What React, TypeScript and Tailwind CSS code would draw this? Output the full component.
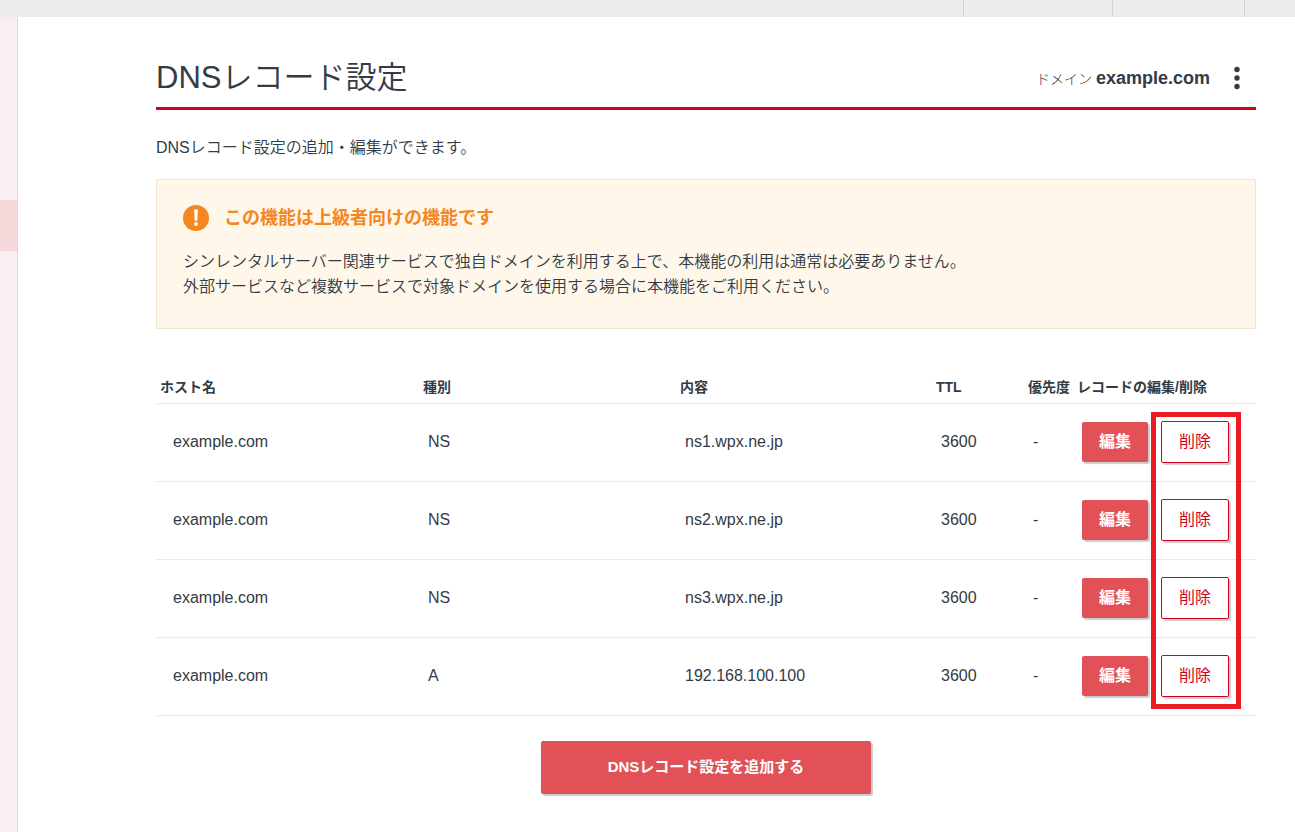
import { clsx } from 'clsx'

const records = [
  { host: 'example.com', type: 'NS', content: 'ns1.wpx.ne.jp', ttl: 3600, priority: '-' },
  { host: 'example.com', type: 'NS', content: 'ns2.wpx.ne.jp', ttl: 3600, priority: '-' },
  { host: 'example.com', type: 'NS', content: 'ns3.wpx.ne.jp', ttl: 3600, priority: '-' },
  { host: 'example.com', type: 'A', content: '192.168.100.100', ttl: 3600, priority: '-' },
]

const columns = [
  { label: 'ホスト名', width: 'w-auto' },
  { label: '種別', width: 'w-[257px]' },
  { label: '内容', width: 'w-[256px]' },
  { label: 'TTL', width: 'w-[92px]' },
  { label: '優先度', width: 'w-[49px]' },
  { label: 'レコードの編集/削除', width: 'w-[183px]' },
]

const cell = 'border-b border-[#ebebeb] p-0 pb-0.5 pl-[9px]'

function TopBar() {
  return (
    <header className="flex h-[17px] justify-end bg-[#ececec]">
      <div className="w-[149px] border-l border-[#d3d3d3]" />
      <div className="w-[132px] border-l border-[#d3d3d3]" />
      <div className="w-[51px] border-l border-[#d3d3d3]" />
    </header>
  )
}

function Sidebar() {
  return (
    <aside className="w-[18px] shrink-0 border-r border-[#dfd8d9] bg-[#faeff0] pt-[183px]">
      <div className="h-[51px] bg-[#f5d8da]" />
    </aside>
  )
}

function PageHeader() {
  return (
    <div className="flex items-center justify-between border-b-[3px] border-[#d0021b] pb-1.5">
      <h1 className="text-[31px] leading-[46px] font-[350]">DNSレコード設定</h1>
      <div className="flex items-center pr-4">
        <p className="text-sm font-light">
          ドメイン <strong className="text-lg font-bold">example.com</strong>
        </p>
        <button type="button" aria-label="メニュー" className="ml-6">
          <svg width="6" height="24" viewBox="0 0 6 24" fill="currentColor" aria-hidden="true">
            <circle cx="3" cy="3.5" r="2.7" />
            <circle cx="3" cy="12" r="2.7" />
            <circle cx="3" cy="20.5" r="2.7" />
          </svg>
        </button>
      </div>
    </div>
  )
}

function Notice() {
  return (
    <section className="mt-[19px] rounded-xs border border-[#efe5cc] bg-[#fff8ea] px-[26px] pt-[25px] pb-[29px]">
      <h2 className="flex items-center gap-[15px] text-lg leading-[26px] font-bold text-[#f6861f]">
        <svg width="26" height="26" viewBox="0 0 26 26" aria-hidden="true">
          <circle cx="13" cy="13" r="13" fill="#f6861f" />
          <path d="M11.1 4.5h3.8l-.6 11.2h-2.6z" fill="#fff" />
          <circle cx="13" cy="19" r="1.9" fill="#fff" />
        </svg>
        この機能は上級者向けの機能です
      </h2>
      <p className="mt-[18px] text-base leading-[25px] font-[350]">
        シンレンタルサーバー関連サービスで独自ドメインを利用する上で、本機能の利用は通常は必要ありません。
        <br />
        外部サービスなど複数サービスで対象ドメインを使用する場合に本機能をご利用ください。
      </p>
    </section>
  )
}

function RecordTable() {
  return (
    <div className="relative mt-[42px]">
      <table className="w-full table-fixed border-separate border-spacing-0 text-left">
        <thead>
          <tr className="h-[33px] text-sm">
            {columns.map((column) => (
              <th
                key={column.label}
                scope="col"
                className={clsx('border-b border-[#ebebeb] p-0 pl-1 font-bold whitespace-nowrap', column.width)}
              >
                {column.label}
              </th>
            ))}
          </tr>
        </thead>
        <tbody>
          {records.map((record) => (
            <tr key={record.content} className="h-[78px] text-base">
              <td className="border-b border-[#ebebeb] p-0 pb-0.5 pl-[17px]">{record.host}</td>
              <td className={cell}>{record.type}</td>
              <td className={cell}>{record.content}</td>
              <td className={cell}>{record.ttl}</td>
              <td className={cell}>{record.priority}</td>
              <td className={cell}>
                <div className="flex items-center gap-[13px]">
                  <button
                    type="button"
                    className="h-10 w-[66px] rounded-xs bg-[#e25157] font-bold text-white shadow-[2px_2px_1px_rgba(0,0,0,0.2)]"
                  >
                    編集
                  </button>
                  <button
                    type="button"
                    className="h-[42px] w-[68px] rounded-xs border border-[#d0021b] bg-white text-[#d0021b] shadow-[2px_2px_1px_rgba(0,0,0,0.2)]"
                  >
                    削除
                  </button>
                </div>
              </td>
            </tr>
          ))}
        </tbody>
      </table>
      {/* marker around the delete buttons */}
      <div className="pointer-events-none absolute top-[41px] right-[15px] bottom-[7px] w-[90px] border-5 border-[#ed1c24]" />
    </div>
  )
}

export default function App() {
  return (
    <div className="flex min-h-screen flex-col bg-white font-['Liberation_Sans','Noto_Sans_CJK_JP',sans-serif] text-[#333b45]">
      <TopBar />
      <div className="flex grow">
        <Sidebar />
        <main className="min-w-0 grow pt-[38px] pr-[39px] pb-9 pl-[138px]">
          <PageHeader />
          <p className="mt-[26px] text-base font-[350]">DNSレコード設定の追加・編集ができます。</p>
          <Notice />
          <RecordTable />
          <div className="mt-[25px] flex justify-center">
            <button
              type="button"
              className="h-[53px] w-[330px] rounded-xs bg-[#e25157] text-[15px] font-bold text-white shadow-[2px_2px_1px_rgba(0,0,0,0.2)]"
            >
              DNSレコード設定を追加する
            </button>
          </div>
        </main>
      </div>
    </div>
  )
}
